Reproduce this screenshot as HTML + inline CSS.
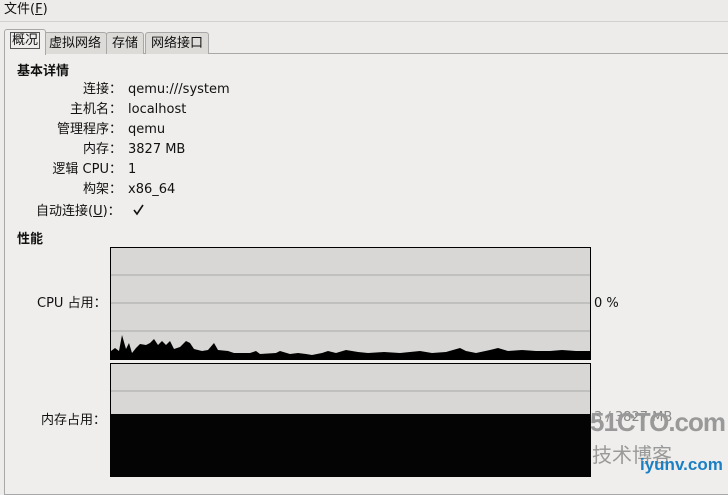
<!DOCTYPE html><html><head><meta charset="utf-8"><style>
body{margin:0;width:728px;height:477px;overflow:hidden;background:#edecea;font-family:"DejaVu Sans","Noto Sans CJK SC",sans-serif;font-size:13px;line-height:16px;color:#111;position:relative}
.a{position:absolute;white-space:nowrap;line-height:16px}
.lab{position:absolute;right:606px;white-space:nowrap;line-height:16px}
.val{position:absolute;left:128px}
.tab{position:absolute;top:32px;height:21px;border:1px solid #a8a8a8;border-bottom:none;background:#dcdbd8;border-radius:3px 3px 0 0;line-height:21px;padding:0 5px;font-size:13px}
</style></head><body>
<div class="a" style="left:0;top:0;width:728px;height:21px;background:#ecebe9;border-bottom:1px solid #d0d0d0"></div>
<div class="a" style="left:4px;top:2px">文件(<u>F</u>)</div>
<div class="a" style="left:4px;top:53px;width:740px;height:440px;border:1px solid #a8a8a8;background:#efeeec"></div>
<div class="tab" style="left:4px;top:29px;height:25px;background:#efeeec;z-index:2"><span style="border:1px solid #555;padding:0 1px">概况</span></div>
<div class="tab" style="left:43px">虚拟网络</div>
<div class="tab" style="left:106px">存储</div>
<div class="tab" style="left:145px">网络接口</div>
<div class="a" style="left:17px;top:64px;font-weight:bold">基本详情</div>
<div class="lab" style="top:82px">连接：</div><div class="val a" style="top:82px">qemu:///system</div>
<div class="lab" style="top:102px">主机名：</div><div class="val a" style="top:102px">localhost</div>
<div class="lab" style="top:122px">管理程序：</div><div class="val a" style="top:122px">qemu</div>
<div class="lab" style="top:142px">内存：</div><div class="val a" style="top:142px">3827 MB</div>
<div class="lab" style="top:162px">逻辑 CPU：</div><div class="val a" style="top:162px">1</div>
<div class="lab" style="top:182px">构架：</div><div class="val a" style="top:182px">x86_64</div>
<div class="a" style="left:36px;top:204px">自动连接(<u>U</u>)：</div>
<svg class="a" style="left:131px;top:203px" width="15" height="15"><path d="M3,7 L6,11 L12,2" fill="none" stroke="#111" stroke-width="1.6"/></svg>
<div class="a" style="left:17px;top:232px;font-weight:bold">性能</div>
<div class="a" style="left:37px;top:296px">CPU 占用：</div>
<div class="a" style="left:594px;top:296px">0 %</div>
<div class="a" style="left:41px;top:413px">内存占用：</div>
<div class="a" style="left:594px;top:410px;color:#888">3 / 3827 MB</div>
<svg class="a" style="left:110px;top:247px" width="482" height="230">
<rect x="0.5" y="0.5" width="480" height="112" fill="#d8d7d5" stroke="#000"/>
<line x1="1" y1="28" x2="480" y2="28" stroke="#a9a9a9"/><line x1="1" y1="56" x2="480" y2="56" stroke="#a9a9a9"/><line x1="1" y1="84" x2="480" y2="84" stroke="#a9a9a9"/>
<path d="M1,112 L1,104 5,101 9,104 12,88 16,102 19,96 22,106 26,101 30,97 36,98 40,96 44,92 48,98 52,94 56,98 60,94 64,102 70,100 76,94 80,96 84,102 92,104 98,103 104,96 108,103 118,104 124,106 140,106 146,104 150,107 166,106 170,104 180,107 188,106 196,107 202,108 212,106 218,104 226,106 236,103 248,105 258,106 274,105 290,106 310,104 322,106 336,105 350,101 356,104 366,106 380,103 388,101 398,104 412,103 426,104 440,104 452,103 466,104 480,104 L480,112Z" fill="#000"/>
<rect x="0.5" y="116.5" width="480" height="120" fill="#d8d7d5" stroke="#000"/>
<line x1="1" y1="144" x2="480" y2="144" stroke="#a9a9a9"/>
<rect x="0" y="167" width="481" height="70" fill="#050405"/>
</svg>
<div class="a" style="left:590px;top:408px;font:bold 26px/28px 'Liberation Sans',sans-serif;color:#999;letter-spacing:-1px">51CTO.com</div>
<div class="a" style="left:592px;top:444px;font-size:20px;line-height:22px;color:#999">技术博客</div>
<div class="a" style="left:640px;top:456px;font-size:17px;line-height:18px;color:#1a7fc4;font-weight:bold;font-family:'Liberation Sans',sans-serif">iyunv.com</div>
</body></html>
